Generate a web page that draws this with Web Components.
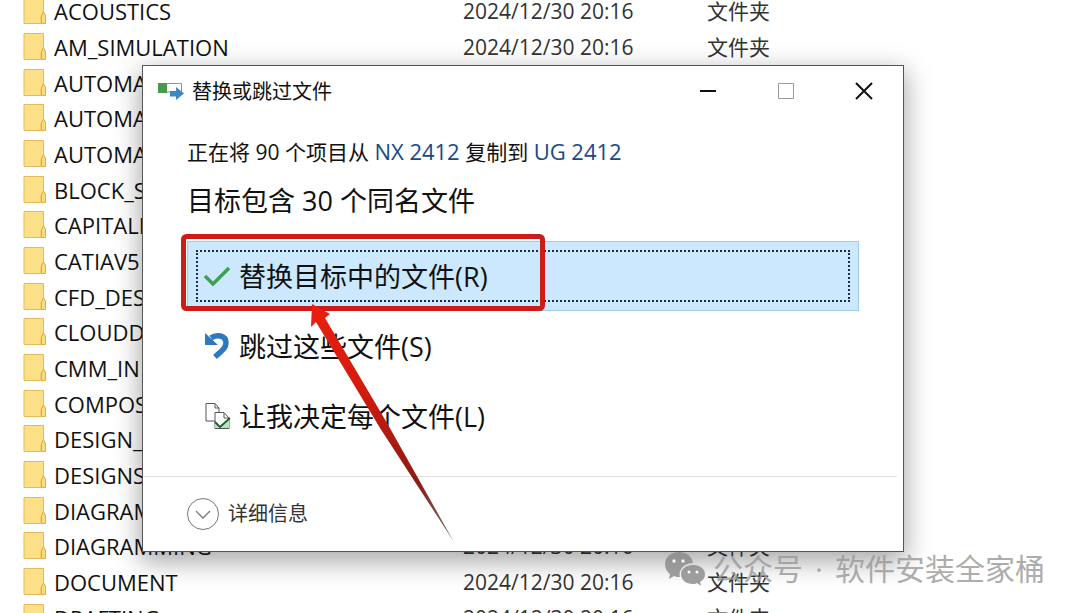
<!DOCTYPE html>
<html lang="zh-CN">
<head>
<meta charset="utf-8">
<title>替换或跳过文件</title>
<style>
    html, body {
        margin: 0;
        height: 100%;
    }
    body {
        position: relative;
        overflow: hidden;
        background: #fff;
        color: #111;
        font: 21px/32px 'Open Sans', 'Noto Sans CJK SC', sans-serif;
    }
    a {
        color: #174a86;
        font-size: 22px;
        text-decoration: none;
    }
    replace-dialog {
        position: absolute;
        top: 65px;
        left: 142px;
        right: 176px;
    }
    red-marker {
        position: absolute;
        top: 234px;
        left: 181px;
    }
    water-mark {
        position: absolute;
        right: 35px;
        bottom: 24px;
    }
</style>
</head>
<body>

<file-list></file-list>

<replace-dialog heading="替换或跳过文件">
    <span slot="message">正在将 90 个项目从 <a href="#nx">NX 2412</a> 复制到 <a href="#ug">UG 2412</a></span>
    <span slot="question">目标包含 30 个同名文件</span>
    <command-link icon="check" selected>替换目标中的文件(R)</command-link>
    <command-link icon="undo">跳过这些文件(S)</command-link>
    <command-link icon="compare">让我决定每个文件(L)</command-link>
    <span slot="details">详细信息</span>
</replace-dialog>

<red-marker></red-marker>
<water-mark><span>公众号</span><span>·</span><span>软件安装全家桶</span></water-mark>

<script>
const FOLDERS = [
    'ACOUSTICS', 'AM_SIMULATION', 'AUTOMA', 'AUTOMA', 'AUTOMA', 'BLOCK_S',
    'CAPITALI', 'CATIAV5', 'CFD_DES', 'CLOUDD', 'CMM_IN', 'COMPOS',
    'DESIGN_', 'DESIGNS', 'DIAGRAM', 'DIAGRAMMING', 'DOCUMENT', 'DRAFTING',
];

function attach(el, html) {
    const template = document.createElement('template');
    template.innerHTML = html;
    const sh = el.attachShadow({ mode: 'open' });
    sh.appendChild(template.content.cloneNode(true));
    return sh;
}

class FolderIcon extends HTMLElement {

    constructor() {
        super();
        attach(this, /*html*/`
<style>
    :host { display: block; width: 23px; height: 28px; }
    svg { display: block; }
</style>
<svg width="23" height="28" viewBox="0 0 23 28" aria-hidden="true">
    <path d="M1 .5H20.500V15L18 20V26.500H1Z" fill="#fbe088" stroke="#e6b95c"/>
    <path d="M18.500 26.500V19L20.500 15L22.500 18V26.500Z" fill="#fbdc78" stroke="#e0ac48"/>
</svg>`);
    }

}
customElements.define('folder-icon', FolderIcon);

class FileList extends HTMLElement {

    constructor() {
        super();
        const rows = FOLDERS.map(name => `
    <tr>
        <td><div class="name"><folder-icon></folder-icon>${name}</div></td>
        <td>2024/12/30 20:16</td>
        <td>文件夹</td>
    </tr>`).join('');
        attach(this, /*html*/`
<style>
    :host { display: block; height: 100%; overflow: hidden; }
    table {
        width: 100%;
        margin-top: -7px;
        border-collapse: collapse;
        table-layout: fixed;
    }
    col:nth-child(1) { width: 463px; }
    col:nth-child(2) { width: 244px; }
    tr { height: 36px; }
    tr:nth-child(3n) { height: 35px; }
    td {
        padding: 0;
        color: #333;
        white-space: nowrap;
    }
    .name {
        display: flex;
        align-items: center;
        gap: 8px;
        padding-left: 23px;
        color: #111;
        font-size: 22px;
        line-height: 30px;
    }
</style>
<table>
    <colgroup><col><col><col></colgroup>
    <tbody>${rows}</tbody>
</table>`);
    }

}
customElements.define('file-list', FileList);

class ReplaceDialog extends HTMLElement {

    constructor() {
        super();
        attach(this, /*html*/`
<style>
    :host {
        display: block;
        background: #fff;
        border: 1px solid #555;
        box-shadow: 0 8px 24px 2px rgba(0,0,0,0.34);
    }
    header {
        display: flex;
        align-items: center;
        height: 50px;
        padding-left: 14px;
    }
    h1 {
        flex: 1;
        margin: 0 0 0 8px;
        padding-top: 2px;
        font-size: 20px;
        font-weight: 400;
    }
    button {
        padding: 0;
        border: 0;
        background: none;
        color: inherit;
        font: inherit;
    }
    header button {
        display: grid;
        place-items: center;
        width: 78px;
        height: 48px;
    }
    main { padding: 19px 44px 25px; }
    p { margin: 0; }
    .question {
        margin: 16px 0 23px;
        font-size: 27px;
        line-height: 34px;
    }
    footer {
        display: flex;
        align-items: center;
        height: 74px;
        margin-right: 6px;
        padding-left: 44px;
        border-top: 1px solid #e2e2e2;
    }
    footer button {
        display: flex;
        align-items: center;
        gap: 9px;
        color: #333;
        font-size: 20px;
    }
</style>
<header>
    <svg width="27" height="20" viewBox="0 0 27 20" aria-hidden="true">
        <path d="M8 2.500H24.500V11H8" fill="#fff" stroke="#8d999c"/>
        <rect x="1" y="2" width="9" height="10" fill="#489b4c"/>
        <path d="M13 10H19V6L27 12.500L19 19V15.500H13Z" fill="#3e88c4"/>
    </svg>
    <h1></h1>
    <button aria-label="最小化"><svg width="18" height="18"><path d="M1 9H17" stroke="#111" stroke-width="2"/></svg></button>
    <button aria-label="最大化"><svg width="18" height="18"><path d="M1.500 1.500H16.500V16.500H1.500Z" fill="none" stroke="#999"/></svg></button>
    <button aria-label="关闭"><svg width="18" height="18"><path d="M1 1L17 17M17 1L1 17" stroke="#111" stroke-width="2"/></svg></button>
</header>
<main>
    <p><slot name="message"></slot></p>
    <p class="question"><slot name="question"></slot></p>
    <slot></slot>
</main>
<footer>
    <button>
        <svg width="32" height="32" aria-hidden="true">
            <circle cx="16" cy="16" r="15.500" fill="none" stroke="#777"/>
            <path d="M9 13L16 20L23 13" fill="none" stroke="#777" stroke-width="1.300"/>
        </svg>
        <slot name="details"></slot>
    </button>
</footer>`);
    }

    connectedCallback() {
        this.shadowRoot.querySelector('h1').textContent = this.getAttribute('heading');
    }

}
customElements.define('replace-dialog', ReplaceDialog);

const ICONS = {
    check: '<path d="M2 14L10 22L26 6" fill="none" stroke="#3f9f52" stroke-width="3.500"/>',
    undo: `<path d="M8 6C13 2 23 3 23 11C23 17 17 20 12 25" fill="none" stroke="#2f78bb" stroke-width="5.500"/>
        <path d="M2 1L2 13L15 13Z" fill="#2f78bb"/>`,
    compare: `<path d="M12 19H3V1.500H12L16 6V10" fill="#fff" stroke="#555"/>
        <path d="M12 2V6H16" fill="none" stroke="#555"/>
        <path d="M12 10.500H21L26 16V26.500H12Z" fill="#fff" stroke="#555"/>
        <path d="M21 11V16H26" fill="none" stroke="#555"/>
        <path d="M26 17V26H12V20L17 25Z" fill="#bfe0c2"/>
        <path d="M12 20L17 25L27 16" fill="none" stroke="#205c2c" stroke-width="1.800"/>`,
};

class CommandLink extends HTMLElement {

    constructor() {
        super();
        attach(this, /*html*/`
<style>
    :host { display: block; }
    button {
        display: flex;
        box-sizing: border-box;
        width: 100%;
        height: 70px;
        padding: 8px;
        border: 1px solid transparent;
        background: none;
        color: #111;
        font: inherit;
        font-size: 27px;
        line-height: 34px;
    }
    .focus {
        display: flex;
        flex: 1;
        align-items: center;
        gap: 8px;
        padding-left: 5px;
        border: 2px dotted transparent;
    }
    .label { padding-top: 2px; }
    :host([selected]) button {
        background: #cce8ff;
        border-color: #9fcbee;
    }
    :host([selected]) .focus { border-color: #1c2c48; }
</style>
<button>
    <span class="focus">
        <svg width="28" height="28" viewBox="0 0 28 28" aria-hidden="true"></svg>
        <span class="label"><slot></slot></span>
    </span>
</button>`);
    }

    connectedCallback() {
        this.shadowRoot.querySelector('svg').innerHTML = ICONS[this.getAttribute('icon')];
    }

}
customElements.define('command-link', CommandLink);

// red frame round the first command, with an arrow pointing up at it
class RedMarker extends HTMLElement {

    constructor() {
        super();
        attach(this, /*html*/`
<style>
    :host { display: block; pointer-events: none; }
    svg { display: block; }
</style>
<svg width="364" height="310" viewBox="0 0 364 310" aria-hidden="true">
    <defs>
        <linearGradient id="fade" x1="131" y1="70" x2="273" y2="308" gradientUnits="userSpaceOnUse">
            <stop offset="0" stop-color="#e8200f"/>
            <stop offset="0.350" stop-color="#d51a0d"/>
            <stop offset="0.750" stop-color="#8c1a12"/>
            <stop offset="1" stop-color="#777"/>
        </linearGradient>
    </defs>
    <rect x="2.500" y="2.500" width="359" height="72" rx="3" fill="none" stroke="#cb1c17" stroke-width="5"/>
    <path d="M131 70L149 80L144 84L206 189L273 308L199 194L135 88L130 93Z" fill="url(#fade)"/>
</svg>`);
    }

}
customElements.define('red-marker', RedMarker);

class WaterMark extends HTMLElement {

    constructor() {
        super();
        attach(this, /*html*/`
<style>
    :host {
        display: flex;
        align-items: center;
        gap: 8px;
        color: #999;
        opacity: 0.8;
        font-size: 30px;
        line-height: 40px;
        white-space: nowrap;
    }
    .text { display: flex; gap: 12px; }
</style>
<svg width="40" height="34" viewBox="0 0 40 34" aria-hidden="true">
    <path d="M14 0C6 0 0 5 0 12C0 16 2 20 5 22L4 27L9 24C11 25 13 25 15 25C13 18 19 11 28 11C27 4 21 0 14 0Z" fill="#888"/>
    <path d="M28 13C21 13 16 17 16 22C16 28 21 32 28 32C29 32 31 32 32 31L36 34L35 30C38 28 40 26 40 22C40 17 35 13 28 13Z" fill="#888"/>
    <g fill="#fff">
        <circle cx="9" cy="9" r="1.700"/><circle cx="18" cy="9" r="1.700"/>
        <circle cx="24" cy="20" r="1.500"/><circle cx="32" cy="20" r="1.500"/>
    </g>
</svg>
<div class="text"><slot></slot></div>`);
    }

}
customElements.define('water-mark', WaterMark);
</script>
</body>
</html>
